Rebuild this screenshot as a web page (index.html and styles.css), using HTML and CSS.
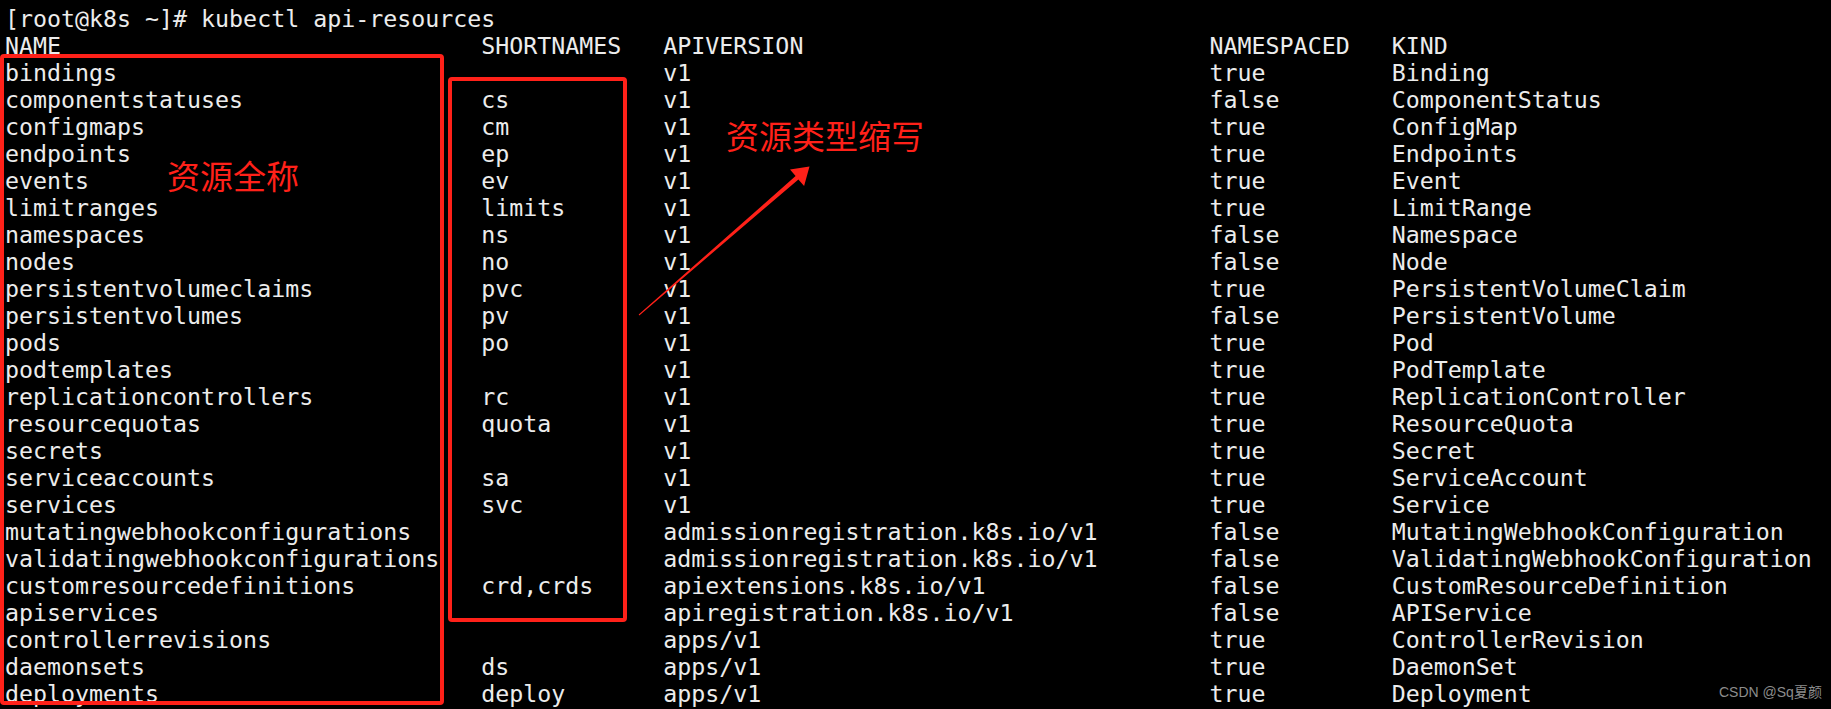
FILE: index.html
```html
<!DOCTYPE html>
<html lang="zh-CN">
<head>
<meta charset="utf-8">
<title>kubectl api-resources</title>
<link rel="stylesheet" href="styles.css">
</head>
<body>
<div class="terminal">
  <div class="prompt">[root@k8s ~]# kubectl api-resources</div>
  <div class="table">
    <div class="row"><span>NAME</span><span>SHORTNAMES</span><span>APIVERSION</span><span>NAMESPACED</span><span>KIND</span></div>
    <div class="row"><span>bindings</span><span></span><span>v1</span><span>true</span><span>Binding</span></div>
    <div class="row"><span>componentstatuses</span><span>cs</span><span>v1</span><span>false</span><span>ComponentStatus</span></div>
    <div class="row"><span>configmaps</span><span>cm</span><span>v1</span><span>true</span><span>ConfigMap</span></div>
    <div class="row"><span>endpoints</span><span>ep</span><span>v1</span><span>true</span><span>Endpoints</span></div>
    <div class="row"><span>events</span><span>ev</span><span>v1</span><span>true</span><span>Event</span></div>
    <div class="row"><span>limitranges</span><span>limits</span><span>v1</span><span>true</span><span>LimitRange</span></div>
    <div class="row"><span>namespaces</span><span>ns</span><span>v1</span><span>false</span><span>Namespace</span></div>
    <div class="row"><span>nodes</span><span>no</span><span>v1</span><span>false</span><span>Node</span></div>
    <div class="row"><span>persistentvolumeclaims</span><span>pvc</span><span>v1</span><span>true</span><span>PersistentVolumeClaim</span></div>
    <div class="row"><span>persistentvolumes</span><span>pv</span><span>v1</span><span>false</span><span>PersistentVolume</span></div>
    <div class="row"><span>pods</span><span>po</span><span>v1</span><span>true</span><span>Pod</span></div>
    <div class="row"><span>podtemplates</span><span></span><span>v1</span><span>true</span><span>PodTemplate</span></div>
    <div class="row"><span>replicationcontrollers</span><span>rc</span><span>v1</span><span>true</span><span>ReplicationController</span></div>
    <div class="row"><span>resourcequotas</span><span>quota</span><span>v1</span><span>true</span><span>ResourceQuota</span></div>
    <div class="row"><span>secrets</span><span></span><span>v1</span><span>true</span><span>Secret</span></div>
    <div class="row"><span>serviceaccounts</span><span>sa</span><span>v1</span><span>true</span><span>ServiceAccount</span></div>
    <div class="row"><span>services</span><span>svc</span><span>v1</span><span>true</span><span>Service</span></div>
    <div class="row"><span>mutatingwebhookconfigurations</span><span></span><span>admissionregistration.k8s.io/v1</span><span>false</span><span>MutatingWebhookConfiguration</span></div>
    <div class="row"><span>validatingwebhookconfigurations</span><span></span><span>admissionregistration.k8s.io/v1</span><span>false</span><span>ValidatingWebhookConfiguration</span></div>
    <div class="row"><span>customresourcedefinitions</span><span>crd,crds</span><span>apiextensions.k8s.io/v1</span><span>false</span><span>CustomResourceDefinition</span></div>
    <div class="row"><span>apiservices</span><span></span><span>apiregistration.k8s.io/v1</span><span>false</span><span>APIService</span></div>
    <div class="row"><span>controllerrevisions</span><span></span><span>apps/v1</span><span>true</span><span>ControllerRevision</span></div>
    <div class="row"><span>daemonsets</span><span>ds</span><span>apps/v1</span><span>true</span><span>DaemonSet</span></div>
    <div class="row"><span>deployments</span><span>deploy</span><span>apps/v1</span><span>true</span><span>Deployment</span></div>
  </div>
</div>

<div class="box box-name"></div>
<div class="box box-short"></div>
<div class="label label-name">资源全称</div>
<div class="label label-short">资源类型缩写</div>
<svg class="arrow" width="1831" height="709" viewBox="0 0 1831 709" xmlns="http://www.w3.org/2000/svg">
  <polygon points="639.3,315.4 798.4,179.4 804.1,186.0 809.5,166.5 790.0,169.4 795.6,176.0 638.7,314.6" fill="#ff2119"/>
</svg>
<div class="watermark">CSDN @Sq夏颜</div>
</body>
</html>
```

FILE: styles.css
```css
html, body {
  margin: 0;
  padding: 0;
  background: #000;
  width: 1831px;
  height: 709px;
  overflow: hidden;
}

body {
  position: relative;
}

.terminal {
  padding: 5px 0 0 5px;
  font-family: "DejaVu Sans Mono", "Liberation Mono", monospace;
  font-size: 23.27px;
  line-height: 27px;
  color: #ececec;
}

.prompt {
  white-space: pre;
}

.table {
  display: flex;
  flex-direction: column;
}

.row {
  display: grid;
  grid-template-columns: 34ch 13ch 39ch 13ch auto;
  white-space: pre;
}

.box {
  position: absolute;
  box-sizing: border-box;
  border: 4px solid #ff2119;
  border-radius: 4px;
}

.box-name {
  left: 0;
  top: 54px;
  width: 444px;
  height: 651px;
}

.box-short {
  left: 448px;
  top: 77px;
  width: 179px;
  height: 545px;
}

.label {
  position: absolute;
  font-family: "Noto Sans CJK SC", "Microsoft YaHei", sans-serif;
  font-size: 33px;
  line-height: 33px;
  color: #ff2119;
  white-space: nowrap;
}

.label-name {
  left: 167px;
  top: 159px;
}

.label-short {
  left: 726px;
  top: 119px;
}

.arrow {
  position: absolute;
  left: 0;
  top: 0;
  pointer-events: none;
}

.watermark {
  position: absolute;
  left: 1719px;
  top: 683px;
  font-family: "Liberation Sans", "Noto Sans CJK SC", sans-serif;
  font-size: 14px;
  line-height: 18px;
  color: #8c8c8c;
  white-space: nowrap;
}
```
